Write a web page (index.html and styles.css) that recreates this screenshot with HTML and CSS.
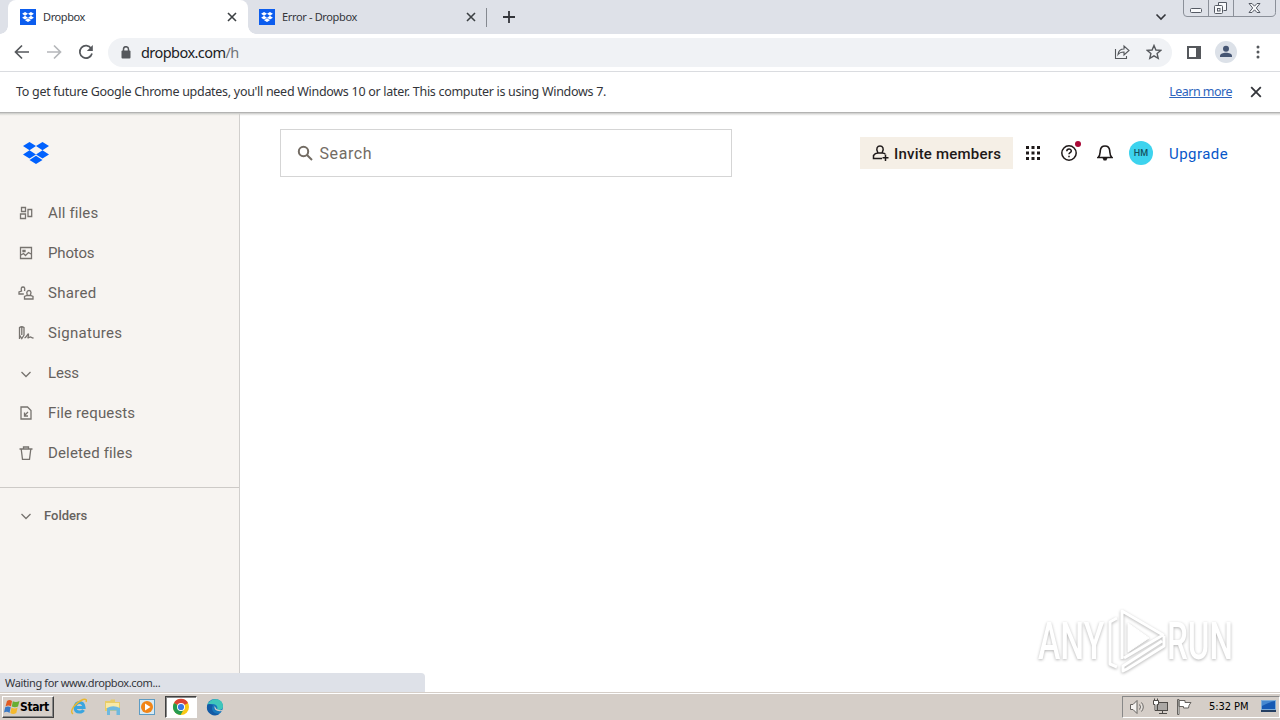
FILE: index.html
```html
<!DOCTYPE html>
<html lang="en">
<head>
<meta charset="utf-8">
<title>Dropbox</title>
<link rel="stylesheet" href="styles.css">
</head>
<body>
<svg class="defs" width="0" height="0">
  <symbol id="box" viewBox="0 0 26 22"><path d="M6.5 0 13 4.1 6.5 8.2 0 4.1ZM19.500 0 26 4.100 19.500 8.200 13 4.100ZM6.500 8.300 13 12.400 6.500 16.500 0 12.400ZM19.500 8.300 26 12.400 19.500 16.500 13 12.400ZM13 13.800 19.500 17.900 13 22 6.500 17.900Z"/></symbol>
  <symbol id="cross" viewBox="0 0 10 10"><path d="M1 1 9 9M9 1 1 9"/></symbol>
  <symbol id="chev" viewBox="0 0 16 16"><path d="M3.500 6 8 10.500 12.500 6"/></symbol>
</svg>
<header class="tabs">
  <div class="tab active"><span class="fav"><svg><use href="#box"/></svg></span><span>Dropbox</span><svg class="x"><use href="#cross"/></svg></div>
  <div class="tab second"><span class="fav"><svg><use href="#box"/></svg></span><span>Error - Dropbox</span><svg class="x"><use href="#cross"/></svg></div>
  <svg class="plus" viewBox="0 0 14 14"><path d="M7 1V13M1 7H13"/></svg>
  <svg class="tabmenu" viewBox="0 0 12 8"><path d="M1.500 1.500 6 6 10.500 1.500"/></svg>
  <svg class="winbtns" viewBox="0 0 94 18">
    <path class="frame" d="M.5 0V13Q.5 16.500 4 16.500H88Q92.500 16.500 92.500 12.500V0M25.500 0V16M50.500 0V16"/>
    <g class="glyph"><rect x="7.500" y="8.500" width="11" height="4" rx="1"/><path d="M35.500 5.500V2.500H43.500V10.500H40.500"/><rect x="31.500" y="5.500" width="8" height="8" rx="1"/><rect x="34.500" y="8.500" width="2.500" height="2.500"/><path d="M66 3.500H69L71.500 6.200 74 3.500H77L73.300 8 77 12.500H74L71.500 9.800 69 12.500H66L69.700 8Z"/></g>
  </svg>
</header>
<div class="toolbar">
  <svg class="nav" viewBox="0 0 16 16"><path d="M15 8H2M8 1.500 1.500 8 8 14.500"/></svg>
  <svg class="nav dim" viewBox="0 0 16 16"><path d="M1 8H14M8 1.500 14.500 8 8 14.500"/></svg>
  <svg class="nav" viewBox="0 0 16 16"><path d="M13.200 4.500A6.200 6.200 0 1 0 14 9.500"/><path class="solid" d="M14.800 1V7H8.800Z"/></svg>
  <div class="omni">
    <svg class="lock" viewBox="0 0 10 13"><rect x=".5" y="4.500" width="9" height="8" rx="1"/><path d="M2.500 5V3.200a2.500 2.500 0 0 1 5 0V5"/></svg>
    <span class="url">dropbox.com<i>/h</i></span>
    <svg class="share" viewBox="0 0 16 16"><path d="M1.500 5V14.500H12.500V12M4 10.500C4.500 6.500 7 5 10 5V2L15 6.500 10 11V8C7.500 8 5.500 8.500 4 10.500Z"/></svg>
    <svg class="star" viewBox="0 0 16 16"><path d="M8 1.500 9.900 6 14.700 6.400 11.100 9.600 12.200 14.300 8 11.800 3.800 14.300 4.900 9.600 1.300 6.400 6.100 6Z"/></svg>
  </div>
  <svg class="panel" viewBox="0 0 14 13"><rect x="1" y="1" width="12" height="11"/><path d="M9 0H14V13H9Z"/></svg>
  <span class="person"><svg viewBox="0 0 22 22"><circle cx="11" cy="7.700" r="3"/><path d="M5 16V15C5 12.500 8 11.700 11 11.700S17 12.500 17 15V16Z"/></svg></span>
  <svg class="dots" viewBox="0 0 4 14"><circle cx="2" cy="2" r="1.500"/><circle cx="2" cy="7" r="1.500"/><circle cx="2" cy="12" r="1.500"/></svg>
</div>
<div class="info"><span>To get future Google Chrome updates, you'll need Windows 10 or later. This computer is using Windows 7.</span><a>Learn more</a><svg><use href="#cross"/></svg></div>
<div class="page">
  <aside>
    <svg class="logo"><use href="#box"/></svg>
    <nav>
      <div class="item"><svg viewBox="0 0 16 16"><path d="M3.500 2.500H7.500V6.500H3.500ZM2.500 9H7.500V13.500H2.500ZM10 4.500H13.700V11.500H10Z"/></svg><span>All files</span></div>
      <div class="item photos"><svg viewBox="0 0 16 16"><path d="M2.500 2.500H13.500V13.500H2.500ZM3 10 5.500 8.500 7.500 10.500 10.500 7.500 13 9M5 5.500H7V6.500H5Z"/></svg><span>Photos</span></div>
      <div class="item wide"><svg viewBox="0 0 16 16"><path d="M5.800 9H1V7L3.500 6Q2.500 2 5 2T6.500 6M6.500 14V11.500L9 10.500H12.500L15 11.500V14ZM9.200 10 8.800 7.500Q9.200 5.500 11 5.500T13 7.500L12.500 10"/></svg><span>Shared</span></div>
      <div class="item wide"><svg viewBox="0 0 16 16"><path d="M1.500 2.500Q3.700 1 6 2.500V10L3.800 13.500 1.500 10ZM3.800 2.500V10M1.500 10V14M6.500 13C9 12 10 7.500 10.500 9.500S8.500 14 11 12.500 12.500 13 15.500 13"/></svg><span>Signatures</span></div>
      <div class="item less"><svg><use href="#chev" y="1"/></svg><span>Less</span></div>
      <div class="item"><svg viewBox="0 0 16 16"><path d="M3 2H9.500L13 5.500V14H3ZM10 7 6.500 10.500M6.500 7.500V11H10"/></svg><span>File requests</span></div>
      <div class="item"><svg viewBox="0 0 16 16"><path d="M1.500 4H14.500M3.200 4 4.500 14.300H11.500L12.800 4M5.500 4V2H10.500V4"/></svg><span>Deleted files</span></div>
    </nav>
    <div class="folders"><svg><use href="#chev"/></svg><span>Folders</span></div>
  </aside>
  <main>
    <div class="top">
      <div class="search"><svg viewBox="0 0 16 16"><circle cx="6.500" cy="6.500" r="4.700"/><path d="M10 10 15 15"/></svg><span>Search</span></div>
      <div class="invite"><svg viewBox="0 0 18 18"><path d="M5.800 8.500C3.500 4.500 5.500 2 8 2S12.500 4.500 10.200 8.500M10 14.500H1.500V11.500Q3 9 6 9H10.500Q12.500 9.300 13.300 10M13.500 10.500V17M10.500 13.800H16.500"/></svg><span>Invite members</span></div>
      <svg class="grid" viewBox="0 0 14 14"><path d="M0 0h3v3H0zM5.500 0h3v3h-3zM11 0h3v3h-3zM0 5.500h3v3H0zM5.500 5.500h3v3h-3zM11 5.500h3v3h-3zM0 11h3v3H0zM5.500 11h3v3h-3zM11 11h3v3h-3z"/></svg>
      <svg class="help" viewBox="0 0 22 22"><circle cx="9" cy="13" r="7.200"/><path d="M6.800 11.200C6.800 8.300 11.300 8.300 11.300 11 11.300 12.800 9 12.500 9 14.300M9 15.800V17.300"/><circle class="red" cx="18" cy="4" r="3"/></svg>
      <svg class="bell" viewBox="0 0 16 18"><path d="M1 13.500C3.500 11.500 3 9 3.300 6.500 3.600 3.500 5.500 2 8 2S12.400 3.500 12.700 6.500C13 9 12.500 11.500 15 13.500Z"/><path class="clap" d="M5.500 14H10.500L9.300 16.500H6.700Z"/></svg>
      <b class="avatar">HM</b>
      <a class="upgrade">Upgrade</a>
    </div>
    <svg class="mark" viewBox="0 0 220 90">
      <g class="word"><text transform="translate(8 59) scale(.66 1)">ANY</text><text transform="translate(137 59) scale(.65 1)">RUN</text></g>
      <g class="play"><path d="M87 18 80 22V64L87 67M92 59V11L133 35 94 58M92 18V11M132 41 93 66V71L97 69 134 46V36"/><path class="tri" d="M98 23V52L119 38Z"/></g>
    </svg>
  </main>
  <div class="status">Waiting for www.dropbox.com...</div>
</div>
<footer>
  <div class="start"><svg viewBox="0 0 16 16"><path fill="#e05a22" d="M3 2Q5.500 0 8 2L7 7.500Q4.500 5.500 1.500 7.500Z"/><path fill="#68ae32" d="M8.800 2.300Q12 4 15.500 2L14 7.500Q11 9 7.800 7.500Z"/><path fill="#3979c6" d="M1.200 8.300Q4 6.500 6.700 8.300L5.500 14Q3 12 0 13.500Z"/><path fill="#f5b92e" d="M7.500 8.500Q10.500 10.300 13.600 8.500L12.300 14Q9 16 6.300 14Z"/></svg><span>Start</span></div>
  <div class="app"><svg viewBox="0 0 18 18"><path fill="none" stroke="#3aa5df" stroke-width="3" d="M5 9.500H14Q13.500 4.500 9.500 4.500T5 9.500Q5 14 9.500 14 12.500 14 13.500 12"/><path fill="none" stroke="#e9b72f" stroke-width="1.400" d="M3 16C-1 13 5 5 13 1.500Q17.500.5 16 4"/></svg></div>
  <div class="app"><svg viewBox="0 0 18 18"><path fill="#e8cc68" d="M1 3H6L7 1.500H11V4H16V13H1Z"/><path fill="#f8e9a6" d="M2 5H15V10H2Z"/><path fill="#6eb9df" d="M3 10Q9 6.500 16 10V17H12.500V12.500H6V17H3Z"/></svg></div>
  <div class="app"><svg viewBox="0 0 18 18"><rect x="1.500" y="1.500" width="15" height="15" fill="#d7eaf4" stroke="#5d9cc4"/><circle cx="9" cy="9" r="6" fill="#f18517"/><path fill="#fff" d="M7 5.500 12.500 9 7 12.500Z"/></svg></div>
  <div class="app pressed"><svg viewBox="0 0 18 18"><circle cx="9" cy="9" r="8" fill="#f9c815"/><path fill="#dd4435" d="M9 9 2 5A8 8 0 0 1 16 5Z"/><path fill="#269b50" d="M2 5A8 8 0 0 0 8.500 17L12 11 9 9Z"/><circle cx="9" cy="9" r="4" fill="#fff"/><circle cx="9" cy="9" r="3.100" fill="#3978e6"/></svg></div>
  <div class="app"><svg viewBox="0 0 18 18"><circle cx="9" cy="9" r="8" fill="#1878bd"/><path fill="#3fc6bb" d="M1.500 7C4-.5 17-1 17 8.500 17 11.500 14 12.500 11 11.500 13 7 7 4.500 1.500 7Z"/><path fill="#135aa5" d="M7 7.500C4 11 8 17 14 15.500A8 8 0 0 1 1.300 7Q3 5 7 7.500Z"/><path fill="#d5cec8" d="M8.500 8Q7.500 14 16 13L17.500 11.500Q14 13 10.500 11Z"/></svg></div>
  <div class="tray">
    <svg class="vol" viewBox="0 0 17 16"><path d="M1.500 5.500H4L8 1.500V14.500L4 10.500H1.500ZM10.500 5.500Q12.500 8 10.500 10.500M12.500 3.500Q16 8 12.500 12.500"/></svg>
    <svg class="net" viewBox="0 0 18 17"><rect class="screen" x="5.500" y="4.500" width="10" height="8"/><path class="plug" d="M1.500 2.500H6.500V6.500H5V12.500H3V6.500H1.500ZM2.500.5V2M5.500 .5V2M10.500 13V15M7 15.500H15"/></svg>
    <svg class="flag" viewBox="0 0 17 16"><path d="M1.500.5H3V15.500H1.500ZM3 1.500H9V3.500H15Q12.500 6 12.500 9H7.500V7.500H3Z"/></svg>
    <span>5:32 PM</span>
    <svg class="desk" viewBox="0 0 17 15"><path fill="#7dacd9" d="M1 1H16V11H1Z"/><path fill="#1559b4" d="M2 2H15V10H2Z"/><path fill="#4588d0" d="M2 2H15Q9 3 2 7Z"/><path fill="#253f62" d="M1 11H16V13H1Z"/></svg>
  </div>
</footer>
</body>
</html>
```
FILE: styles.css
```css
* { box-sizing: border-box; }
body { margin: 0; width: 1280px; height: 720px; overflow: hidden; display: flex; flex-direction: column; background: #fff; font-family: "Noto Sans", sans-serif; color: #33353a; }
svg { display: block; flex: none; fill: none; stroke: currentColor; }
.defs { position: absolute; }
.tabs { height: 34px; background: #dee1e8; display: flex; flex: none; position: relative; padding-left: 8px; }
.tab { display: flex; align-items: center; width: 240px; height: 34px; padding: 0 11px 0 12px; font-size: 11px; letter-spacing: -.4px; }
.tab > span:nth-child(2) { margin-top: -2px; }
.tab.active { background: #fff; border-radius: 8px 8px 0 0; position: relative; }
.tab.active::before, .tab.active::after { content: ""; position: absolute; bottom: 0; width: 8px; height: 8px; }
.tab.active::before { left: -8px; background: radial-gradient(circle at 0 0, transparent 7.5px, #fff 8px); }
.tab.active::after { right: -8px; background: radial-gradient(circle at 100% 0, transparent 7.5px, #fff 8px); }
.tab.second { width: 239px; padding-left: 11px; position: relative; letter-spacing: -.35px; }
.tab.second::after { content: ""; position: absolute; right: 0; top: 8px; width: 1px; height: 19px; background: #858990; }
.fav { width: 16px; height: 16px; background: #0c5dee; display: grid; place-items: center; margin-right: 7px; }
.fav svg { width: 12px; height: 10px; fill: #fff; stroke: none; }
.x { width: 10px; height: 10px; margin-left: auto; stroke-width: 1.600; color: #3c4043; }
.plus { width: 14px; height: 14px; margin: 10px 0 0 15px; stroke-width: 1.800; }
.tabmenu { width: 12px; height: 8px; margin: 13px 16px 0 auto; stroke-width: 1.600; }
.winbtns { width: 94px; height: 18px; margin-right: 3px; }
.frame { stroke: #8b9099; }
.glyph { stroke: #555a64; fill: #f8f9fb; }
.toolbar { height: 38px; flex: none; display: flex; align-items: center; border-bottom: 1px solid #dadce0; padding: 0 18px 1px 14px; color: #55585c; }
.nav { width: 16px; height: 16px; margin-right: 16px; stroke-width: 1.700; }
.nav:nth-child(3) { margin-right: 14px; }
.dim { color: #b5b7ba; }
.solid { fill: currentColor; stroke: none; }
.omni { width: 1064px; flex: none; height: 29px; background: #f0f2f5; border-radius: 15px; display: flex; align-items: center; padding: 0 10px 0 13px; }
.lock { width: 10px; height: 13px; stroke-width: 1.500; }
.lock rect { fill: currentColor; stroke: none; }
.url { margin-left: 10px; font-size: 14.500px; letter-spacing: -.55px; color: #202124; }
.url i { font-style: normal; color: #70757a; }
.share { width: 16px; height: 16px; margin-left: auto; stroke-width: 1.100; }
.star { width: 16px; height: 16px; margin-left: 16px; stroke-width: 1.400; }
.panel { width: 14px; height: 13px; margin-left: 15px; stroke-width: 2; }
.panel path { fill: currentColor; stroke: none; }
.person { width: 22px; height: 22px; flex: none; border-radius: 50%; background: #dce1e8; margin-left: 14px; color: #465673; }
.person svg { fill: currentColor; stroke: none; }
.dots { width: 4px; height: 14px; margin-left: 19px; fill: currentColor; stroke: none; }
.info { height: 40px; flex: none; display: flex; align-items: center; padding: 0 19px 0 16px; font-size: 12.500px; letter-spacing: -.293px; }
.info span, .info a { margin-top: -2px; }
.info a { margin-left: auto; color: #2d64bd; text-decoration: underline; letter-spacing: -.52px; }
.info svg { width: 12px; height: 12px; margin-left: 18px; margin-right: -1px; stroke-width: 1.500; }
.info use { transform: scale(1); }
.page { height: 580px; flex: none; display: flex; position: relative; border-top: 1px solid #b3b3b2; background: linear-gradient(#c9c9c7, #f2f2f1 2px, #fff 3px); font-family: Roboto, sans-serif; }
aside { width: 240px; background: linear-gradient(#c9c9c7, #eeece8 2px, #f7f4f1 3px); border-right: 1px solid #d1cfcd; color: #66625e; }
.logo { width: 26px; height: 22px; margin: 28.500px 0 0 23px; fill: #0061fe; stroke: none; }
nav { padding-top: 29.500px; }
.item { height: 40px; padding-left: 18px; display: flex; align-items: center; font-size: 15px; }
.item svg, .folders svg { width: 16px; height: 16px; stroke-width: 1.300; color: #77736f; }
.item span { margin-left: 14px; letter-spacing: .15px; }
.item.wide span { letter-spacing: .3px; }
.item.photos span { letter-spacing: -.15px; }
.item.less span { letter-spacing: -.2px; }
.folders { margin-top: 14px; border-top: 1px solid #cdcac7; height: 56px; display: flex; align-items: center; padding-left: 18px; font-size: 13px; font-weight: 500; }
.folders span { margin-left: 10px; }
main { flex: 1; position: relative; }
.top { display: flex; align-items: center; height: 48px; margin: 16px 0 0 40px; color: #1e1919; }
.search { width: 452px; height: 48px; border: 1px solid #d5d5d5; display: flex; align-items: center; padding-left: 16px; color: #736c64; font-size: 16px; letter-spacing: .6px; }
.search svg { width: 16px; height: 16px; stroke-width: 2; margin-right: 6.500px; }
.invite { width: 153px; height: 32px; margin-left: 128px; background: #f5efe6; display: flex; align-items: center; padding-left: 12px; font-size: 15px; font-weight: 500; letter-spacing: .2px; }
.invite span, .upgrade { padding-top: 1px; }
.invite svg { width: 18px; height: 18px; margin-right: 4px; stroke-width: 1.500; }
.grid { width: 14px; height: 14px; margin-left: 13px; fill: currentColor; stroke: none; }
.help { width: 22px; height: 22px; margin: -4px 0 0 20px; stroke-width: 1.500; }
.help .red { fill: #a90836; stroke: none; }
.bell { width: 16px; height: 18px; margin-left: 15px; stroke-width: 1.600; }
.clap { fill: currentColor; stroke: none; }
.avatar { width: 24px; height: 24px; margin-left: 16px; border-radius: 50%; background: #3dd3ee; display: grid; place-items: center; color: #15515e; font-size: 9px; font-weight: 500; letter-spacing: .2px; }
.upgrade { margin-left: 16px; color: #0757c9; font-size: 15px; letter-spacing: .45px; }
.mark { position: absolute; left: 790px; top: 487px; width: 220px; height: 90px; filter: drop-shadow(0 1px 1.500px #b4b4b4); }
.word { fill: #fff; stroke: none; font: 500 51px Roboto, sans-serif; }
.play { stroke: #fff; stroke-width: 3; stroke-linejoin: round; }
.tri { fill: #fff; stroke-width: 1; }
.status { position: absolute; left: 0; bottom: 0; width: 425px; height: 19px; background: #dee1e8; border-radius: 0 4px 0 0; font: 11px/19px "Noto Sans", sans-serif; letter-spacing: -.36px; padding-left: 5px; }
footer { height: 28px; flex: none; background: #d5cec8; border-top: 1px solid #d5cec8; box-shadow: inset 0 1px #fff; display: flex; align-items: center; padding: 2px 0 2px 2px; color: #000; }
footer .start { width: 52px; height: 22px; display: flex; align-items: center; padding-left: 1px; border: 1px solid; border-color: #fff #404040 #404040 #fff; box-shadow: inset -1px -1px #888; font: bold 12px "DejaVu Sans Condensed", sans-serif; letter-spacing: -.4px; margin-right: 8px; }
.start svg { width: 16px; height: 16px; stroke: none; }
.app { width: 34px; height: 22px; display: grid; place-items: center; }
.app svg { width: 18px; height: 18px; stroke: none; }
.pressed { width: 32px; margin: 0 1px; background: #fff; border: 1px solid; border-color: #404040 #fff #fff #404040; box-shadow: inset 1px 1px #888; }
.tray { width: 158px; height: 22px; margin-left: auto; border: 1px solid; border-color: #888 #fff #fff #888; display: flex; align-items: center; padding-left: 6px; font: 11px "DejaVu Sans Condensed", sans-serif; letter-spacing: -.05px; stroke-width: 1; }
.tray svg { stroke: #65625f; fill: #fff; }
.vol { width: 17px; height: 16px; }
.vol path { fill: #f5f3f1; }
.net { width: 18px; height: 17px; margin-left: 6px; }
.net .screen { fill: #aaa7a4; stroke: #4d4a47; }
.net .plug { stroke: #4d4a47; fill: #fff; }
.flag { width: 17px; height: 16px; margin-left: 6px; }
.tray span { margin-left: 16px; white-space: nowrap; }
.tray .desk { width: 17px; height: 15px; margin-left: auto; stroke: none; margin-right: 2px; }
```
